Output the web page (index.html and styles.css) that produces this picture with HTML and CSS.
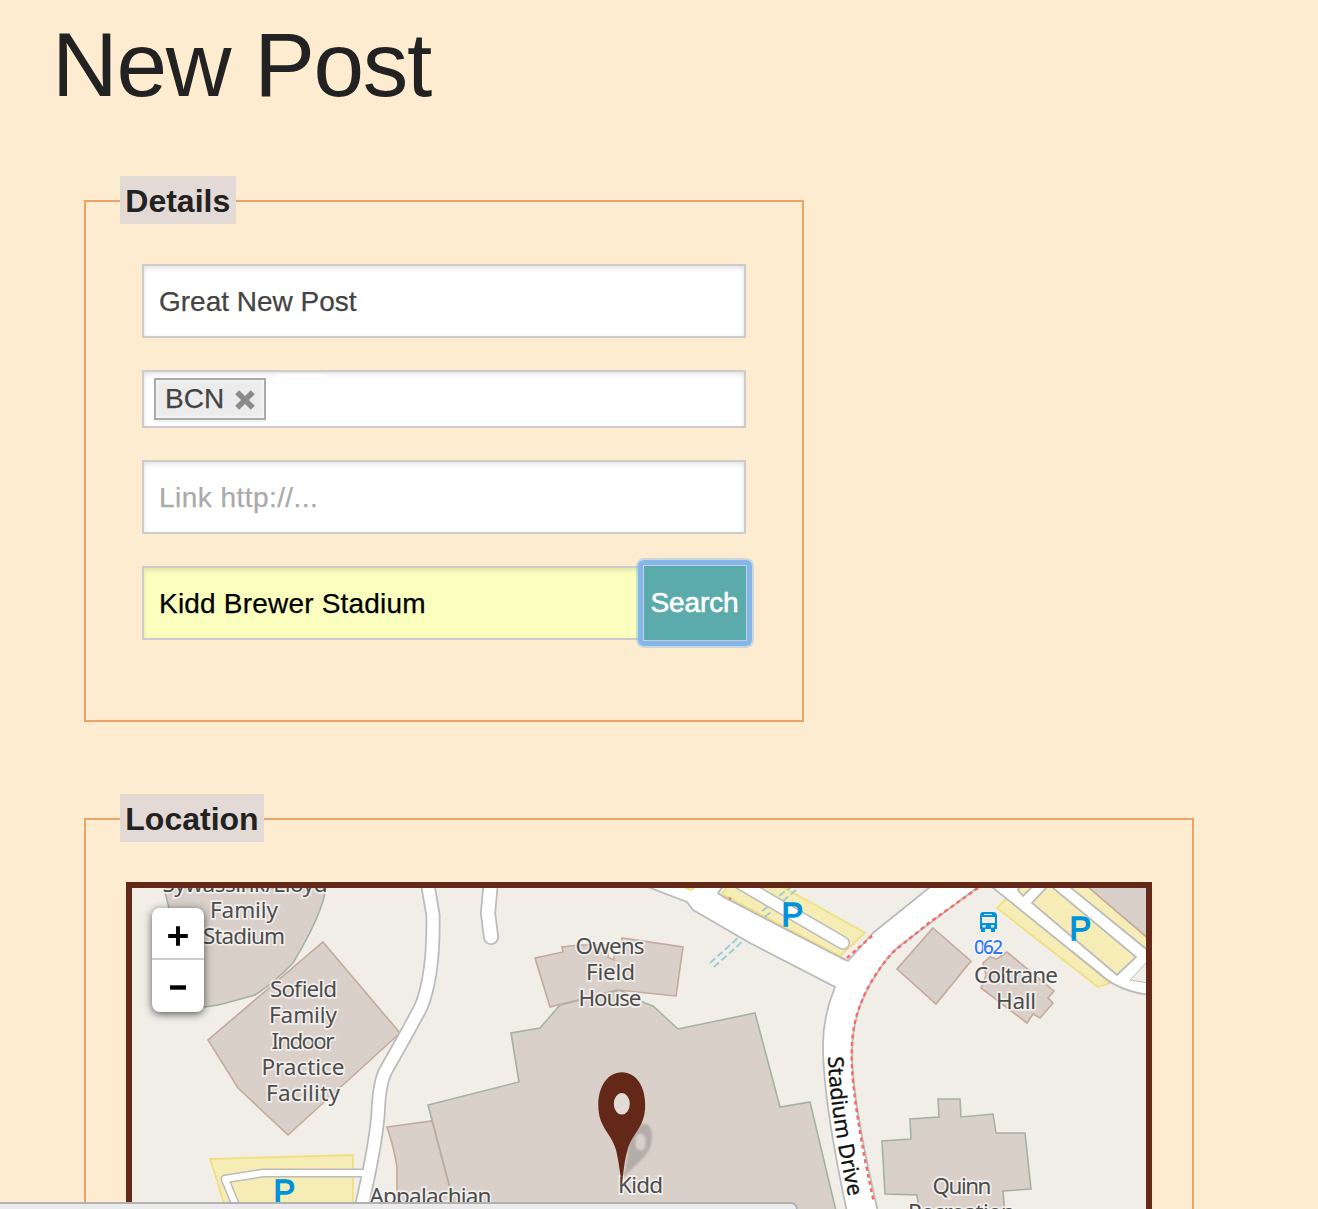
FILE: index.html
```html
<!DOCTYPE html>
<html lang="en">
<head>
<meta charset="utf-8">
<title>New Post</title>
<link rel="stylesheet" href="styles.css">
</head>
<body>
<main class="page">
  <h1 class="title">New Post</h1>
  <section class="panel details">
    <h2 class="legend">Details</h2>
    <form class="form">
      <div class="field">Great New Post</div>
      <div class="field tags">
        <span class="tag">BCN
          <svg class="tag-x" viewBox="0 0 18 18"><path d="M2 2L16 16M16 2L2 16" stroke="#8b8b8b" stroke-width="5"/></svg>
        </span>
        <span class="tag-entry"></span>
      </div>
      <div class="field placeholder">Link http://...</div>
      <div class="search">
        <div class="field filled">Kidd Brewer Stadium</div>
        <div class="focus"><button type="button" class="button">Search</button></div>
      </div>
    </form>
  </section>
  <section class="panel location">
    <h2 class="legend">Location</h2>
    <div class="map">
      <svg class="canvas" viewBox="132 888 1014 321" width="1014" height="321">
        <!-- buildings -->
        <g class="building green">
          <path d="M164 888L169 908L174 1000L204 1007Q220 1005 226 1003L255 995Q275 982 293 963Q322 915 326 888Z"/>
          <path d="M560 1005L540 1028L511 1033L519 1082L428 1105L432 1120L457 1215H837L810 1102L780 1107L755 1013L678 1029L653 1006L645 1003L620 990Z"/>
          <path d="M938 1099H960L961 1117L993 1114L996 1133H1025L1031 1189L1003 1191L1005 1215H920L917 1195L885 1194L882 1141L911 1139L910 1119L939 1117Z"/>
        </g>
        <g class="building">
          <path d="M323 942L400 1033L288 1135L238 1088L208 1040Z"/>
          <path d="M535 958L563 952L562 947L580 945L608 945L608 957L614 960V953H620L622 938L683 947L676 996L617 990L550 1007Z"/>
          <path d="M387 1127L432 1121L457 1215H397V1167Q394 1148 387 1127Z"/>
          <path d="M933 928L971 961L936 1004L897 969Z"/>
          <path d="M990 957L997 959L1007 952L1054 991L1048 998L1053 1003L1040 1018L1033 1014L1027 1023L981 988L986 975L983 963Z"/>
        </g>
        <!-- parking beside the practice facility -->
        <path class="lot" d="M210 1159L353 1155V1215H227L217 1180Z"/>
        <g class="casing"><path d="M427 880L433 915Q434 975 421 1007L407 1033L385 1072Q379 1085 378 1115Q375 1150 360 1213" stroke-width="15"/><path d="M491 880L488 913L491 937" stroke-width="16"/><path d="M368 1173H263L225 1179L239 1213" stroke-width="9"/></g>
        <g class="road"><path d="M427 880L433 915Q434 975 421 1007L407 1033L385 1072Q379 1085 378 1115Q375 1150 360 1213" stroke-width="11.5"/><path d="M491 880L488 913L491 937" stroke-width="12.5"/><path d="M368 1173H263L225 1179L239 1213" stroke-width="6"/></g>
        <!-- Stadium Drive -->
        <path class="drive" d="M648 887L687 902L693 910L750 943L835 987Q823 1016 823 1045Q823 1100 847 1212H878Q852 1100 852 1053Q852 1010 877 973Q885 960 897 948L978 887H930L873 933L848 961L722 896L718 893L724 885L690 880Z"/>
        <path class="lot" d="M727 887L722 894L840 956L865 933L792 892L782 887Z"/>
        <path d="M722 896L845 960" fill="none" stroke="#bbb" stroke-width="1.5"/>
        <path class="lot" d="M683 887L691 890L697 886Z"/>
        <g class="casing"><path d="M740 883L843 943" stroke-width="14"/></g>
        <g class="road"><path d="M740 883L843 943" stroke-width="11"/></g>
        <g class="steps"><path d="M710 963L739 937M714 967L743 941M762 911L769 906M765 917L772 911M779 896L791 887M783 901L797 889"/></g>
        <g class="footway"><path d="M978 888L930 922L893 952Q871 977 861 1003Q847 1035 854 1090Q859 1135 874 1203"/><path d="M847 958L873 935M729 898L731 899"/></g>
        <!-- lot by Coltrane Hall -->
        <path class="lot" d="M997 908L1007 898L1110 983L1098 987Z"/>
        <path class="drive" d="M992 887L1100 974Q1118 991 1150 995V880Z"/>
        <path class="lot edge" d="M1018 890L1023 896L1032 887H1020Z"/>
        <path class="lot edge" d="M1047 887L1032 903L1117 975L1136 957L1052 887Z"/>
        <path class="lot edge" d="M1070 887L1150 952V934L1090 880Z"/>
        <g class="building"><path d="M1088 887L1150 940V880Z"/></g>
        <path d="M1130 980L1148 961V983Z" fill="#f1eee8" stroke="#bbb"/>
        <!-- bus stop -->
        <path fill="#0092da" fill-rule="evenodd" d="M983 912H993Q997 912 997 916V929H995V932H991V929H985V932H981V929H980V916Q980 912 983 912ZM984 914V915H992V914ZM982 917V923H995V917ZM982.500 925V927.500H985.500V925ZM991 925V927.500H994V925Z"/>
        <g class="parking"><text x="273.500" y="1203">P</text><text x="781.500" y="925.500">P</text><text x="1069.500" y="939.500">P</text></g>
        <text x="974" y="954" class="stop" textLength="29">062</text>
        <g class="label">
          <text x="245" y="892" textLength="165">Sywassink/Lloyd</text>
          <text x="244" y="917.500" textLength="68">Family</text>
          <text x="244" y="943.500" textLength="82">Stadium</text>
          <text x="303.500" y="996.500" textLength="67">Sofield</text>
          <text x="303" y="1022.500" textLength="68">Family</text>
          <text x="303" y="1048.500" textLength="63">Indoor</text>
          <text x="303" y="1074.500" textLength="83">Practice</text>
          <text x="303" y="1100.500" textLength="74">Facility</text>
          <text x="610" y="953.500" textLength="69">Owens</text>
          <text x="610.500" y="979.500" textLength="49">Field</text>
          <text x="610" y="1005.500" textLength="63">House</text>
          <text x="430.500" y="1204" textLength="122">Appalachian</text>
          <text x="1016" y="983" textLength="84">Coltrane</text>
          <text x="1016" y="1009" textLength="40">Hall</text>
          <text x="962" y="1194" textLength="59">Quinn</text>
          <text x="961.500" y="1220" textLength="107">Recreation</text>
        </g>
        <path id="drive-line" d="M828 1057Q830 1116 850 1203" fill="none"/>
        <text class="street"><textPath href="#drive-line" textLength="142">Stadium Drive</textPath></text>
        <!-- marker and its shadow -->
        <path class="shadow" fill-rule="evenodd" d="M622 1180C630 1160 626 1144 633 1131C641 1119 653 1122 652 1138C651 1158 635 1162 622 1180ZM636 1142a5 6 0 1 0 9 0a5 6 0 1 0 -9 0"/>
        <g class="label"><text x="640.500" y="1192.500" textLength="45">Kidd</text></g>
        <ellipse cx="621.800" cy="1104" rx="9" ry="12" fill="#e3dcd6"/>
        <path fill="#632817" fill-rule="evenodd" d="M621.800 1072.300C608 1072.300 598.300 1086 598.300 1105C598.300 1128 611 1132 616 1150C619 1162 620 1174 621.800 1183C623.500 1174 624 1162 627.500 1150C632 1133 645.200 1128 645.200 1105C645.200 1086 636 1072.300 621.800 1072.300ZM621.800 1093a8 10.800 0 1 1 0 21.600a8 10.800 0 1 1 0 -21.600Z"/>
      </svg>
      <div class="zoom">
        <svg class="zoom-key" viewBox="0 0 52 51"><path d="M16 28.500H36M26 18.500V38.500" stroke="#000" stroke-width="4"/></svg>
        <svg class="zoom-key" viewBox="0 0 52 51"><path d="M18 27H34" stroke="#000" stroke-width="4.400"/></svg>
      </div>
    </div>
  </section>
</main>
<div class="status"></div>
</body>
</html>
```
FILE: styles.css
```css
* { box-sizing: border-box; }
body {
  margin: 0;
  background: #feecd1;
  color: #222;
  font-family: "Liberation Sans", Arial, sans-serif;
  overflow: hidden;
}
.page { height: 1209px; overflow: hidden; padding: 16px 0 0 52px; }
.title {
  margin: 0;
  font-size: 91px;
  line-height: 98px;
  height: 100px;
  font-weight: 400;
  letter-spacing: -1.3px;
}
.panel { margin-left: 32px; border: 2px solid #eaa467; }
.details { margin-top: 84px; width: 720px; height: 522px; }
.location { margin-top: 96px; width: 1110px; height: 500px; }
.legend {
  width: fit-content;
  height: 48px;
  margin: -26px 0 0 34px;
  padding: 0 5.3px;
  font-size: 32px;
  line-height: 50px;
  font-weight: 700;
  background: #e3d9d5;
}
.form { display: flex; flex-direction: column; gap: 32px; width: 604px; margin: 40px 0 0 56px; }
.field {
  height: 74px;
  padding: 1px 15px 0;
  border: 2px solid #ccc;
  background: #fff;
  box-shadow: inset 0 2px 5px rgba(0, 0, 0, 0.12);
  color: #444;
  font-size: 28px;
  line-height: 70px;
  white-space: nowrap;
  -webkit-text-stroke: 0.25px;
}
.tags { display: flex; gap: 10px; height: 58px; padding: 2px 10px; line-height: 38px; }
.tag {
  display: flex;
  align-items: center;
  gap: 11px;
  width: 112px;
  height: 42px;
  margin-top: 4px;
  padding-left: 9px;
  border: 2px solid #aaa;
  background: #ececec;
  box-shadow: inset 0 0 4px #fff, 0 2px 0 rgba(0, 0, 0, 0.05);
}
.tag-x { flex: none; width: 20px; height: 20px; margin-top: 1px; }
.tag-entry { width: 50px; height: 8px; background: #fff; }
.placeholder { color: #aaa; letter-spacing: 0.45px; }
.search { display: flex; height: 74px; }
.filled { flex: 0 0 500px; background: #faffbd; color: #000; letter-spacing: 0.2px; }
.focus {
  flex: 0 0 114px;
  height: 86px;
  margin: -6px 0 0 -4px;
  padding: 5px;
  border-radius: 6px;
  background: #83b7ea;
  box-shadow: 0 0 0 2px rgba(131, 183, 234, 0.4);
  z-index: 1;
}
.button {
  display: block;
  width: 104px;
  height: 76px;
  padding: 0 1px 0 0;
  border: 1px solid #c9cddd;
  background: #5babac;
  color: #fff;
  font: 28px "Liberation Sans", Arial, sans-serif;
  letter-spacing: -0.1px;
  -webkit-text-stroke: 0.6px #fff;
}
.map {
  position: relative;
  width: 1026px;
  height: 400px;
  margin: 40px 0 0 40px;
  border: 6px solid #632817;
  background: #f1eee8;
}
.canvas { display: block; overflow: hidden; }
.building path { fill: #d9d0ca; stroke: #c3aa9d; stroke-width: 1.6; }
.green path { stroke: #a4b3a0; }
.lot { fill: #f5edb5; stroke: #f0df80; stroke-width: 1.8; }
.edge { stroke: #bbb; }
.casing path { fill: none; stroke: #bbb; stroke-linecap: round; stroke-linejoin: round; }
.road path { fill: none; stroke: #fff; stroke-linecap: round; stroke-linejoin: round; }
.drive { fill: #fff; stroke: #bbb; stroke-width: 1.8; }
.steps path { fill: none; stroke: #9fcdd0; stroke-width: 2; stroke-dasharray: 7 3; }
.footway path { fill: none; stroke: #fa6a63; stroke-width: 2.4; stroke-dasharray: 4 3.4; }
.parking text {
  font: 32.5px "Liberation Sans", Arial, sans-serif;
  fill: #0092da;
  stroke: #0092da;
  stroke-width: 1.3;
}
.stop { font: 500 19px "Noto Sans", sans-serif; fill: #2f76ff; stroke: #fff; stroke-width: 2; paint-order: stroke; }
.label text {
  font: 22.5px "Noto Sans", sans-serif;
  fill: #4c4c4c;
  stroke: rgba(250, 248, 246, 0.75);
  stroke-width: 3.5;
  paint-order: stroke;
  text-anchor: middle;
}
.street { font: 21.5px "Noto Sans", sans-serif; fill: #111; stroke: #111; stroke-width: 0.3; }
.shadow { fill: #aaa49f; opacity: 0.8; filter: blur(1.3px); }
.zoom {
  position: absolute;
  left: 20px;
  top: 20px;
  display: flex;
  flex-direction: column;
  width: 52px;
  height: 104px;
  border-radius: 8px;
  background: #fff;
  box-shadow: 0 2px 9px rgba(0, 0, 0, 0.65);
}
.zoom-key { display: block; width: 52px; height: 52px; }
.zoom-key:first-child { border-bottom: 2px solid #ccc; }
.status {
  position: fixed;
  left: 0;
  bottom: 0;
  width: 798px;
  height: 7px;
  border: solid #b1b1b1;
  border-width: 2px 2px 0 0;
  border-radius: 0 7px 0 0;
  background: #ebebeb;
}
```
